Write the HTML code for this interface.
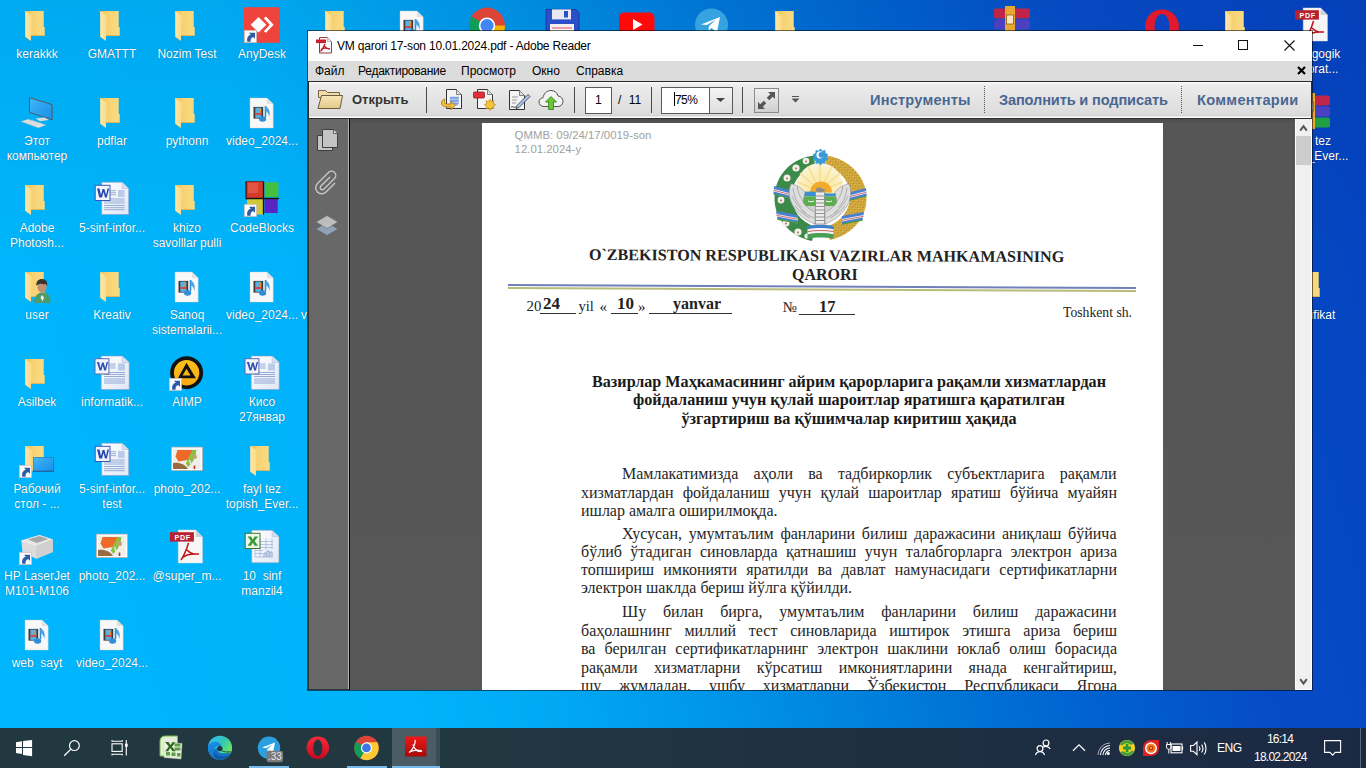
<!DOCTYPE html>
<html><head><meta charset="utf-8">
<style>
*{margin:0;padding:0;box-sizing:border-box}
html,body{width:1366px;height:768px;overflow:hidden}
body{position:relative;font-family:"Liberation Sans",sans-serif;background:linear-gradient(180deg,rgba(0,30,110,.07) 0px,rgba(0,30,110,0) 260px),linear-gradient(74deg,#00b6fc 0%,#00b3fa 27%,#01aaf4 35%,#0098ea 45%,#0080dc 56%,#0064d0 69%,#064cc6 81%,#0442be 100%)}
.a{position:absolute}
.ic{position:absolute;overflow:visible}
.lbl{position:absolute;width:76px;text-align:center;color:#fff;font-size:12px;line-height:15px;text-shadow:0 0 1px rgba(0,0,0,.45);white-space:nowrap}
.t{position:absolute;white-space:nowrap;line-height:1}
/* window */
#win{left:307px;top:30px;width:1006px;height:661px;background:#fff;background-clip:padding-box;border:1px solid rgba(0,0,0,.55)}
.menu span{position:absolute;top:64px;font-size:12px;color:#000;line-height:14px}
.tbsep{position:absolute;top:87px;width:1px;height:26px;background:#4a4a4a}
.tbl{position:absolute;top:92px;font-size:14.6px;font-weight:bold;color:#4a6792;line-height:16px;white-space:nowrap}
.dsep{position:absolute;top:86px;width:1px;height:28px;background-image:linear-gradient(#555 50%,transparent 50%);background-size:1px 2px}
.body{font-family:"Liberation Serif",serif;font-size:16px;color:#262626;line-height:18px}
.jl{position:absolute;left:581px;width:536px;text-align:justify;text-align-last:justify;white-space:nowrap}
.jl{white-space:normal}
/* taskbar */
#task{left:0;top:728px;width:1366px;height:40px;background:linear-gradient(90deg,#213841 0%,#223841 35%,#1f2f41 65%,#1b2a43 100%)}
</style></head><body>

<!-- DESKTOP ICONS -->
<div id="desk">
<svg width="0" height="0" style="position:absolute">
<defs>
 <linearGradient id="gBack" x1="0" y1="0" x2="1" y2="0"><stop offset="0" stop-color="#eebf4f"/><stop offset="0.35" stop-color="#f6d173"/><stop offset="1" stop-color="#fbdc82"/></linearGradient>
 <linearGradient id="gFlap" x1="0" y1="0" x2="1" y2="0"><stop offset="0" stop-color="#fde7a6"/><stop offset="1" stop-color="#f9da88"/></linearGradient>
 <linearGradient id="gPage" x1="0" y1="0" x2="1" y2="1"><stop offset="0" stop-color="#ffffff"/><stop offset="1" stop-color="#dfe6f4"/></linearGradient>
 <linearGradient id="gScreen" x1="0" y1="0" x2="1" y2="1"><stop offset="0" stop-color="#49b6f8"/><stop offset="0.5" stop-color="#2aa2f0"/><stop offset="1" stop-color="#1c8ee6"/></linearGradient>
 <linearGradient id="gAimp" x1="0" y1="0" x2="0" y2="1"><stop offset="0" stop-color="#fcc21c"/><stop offset="1" stop-color="#f6a910"/></linearGradient>
 <symbol id="folder" viewBox="0 0 48 48">
  <path d="M12.2 10H30.7V25.9H31.7V34.7H17.5Z" fill="url(#gBack)"/>
  <path d="M17.5 34H31.7V34.8H17.5z" fill="#eab04a"/>
  <path d="M12.2 10L18.7 14.7L17.9 39.9L12.2 35.8Z" fill="url(#gFlap)"/>
 </symbol>
 <symbol id="sc" viewBox="0 0 48 48">
  <rect x="6.3" y="29.3" width="12.3" height="12.3" fill="#fbfbfb" stroke="#c8b8b0" stroke-width="0.7"/>
  <path d="M9.3 40.8C8.6 36.8 10.2 34.6 12.8 33.8L11 31.8H17V37.8L15.1 35.9C13.2 36.6 12.2 38.2 12.6 40.8Z" fill="#2d5ba6"/>
 </symbol>
 <symbol id="video" viewBox="0 0 48 48">
  <path d="M12 10h16.9l6.3 6v24.1H12z" fill="#f8f8f8" stroke="#c8c8c8" stroke-width="0.4"/>
  <path d="M28.9 10v6h6.3z" fill="#e0e0e0"/>
  <rect x="15.5" y="18.9" width="9.7" height="11.7" fill="#3a3a3a"/>
  <rect x="17.3" y="19.6" width="6.1" height="10.3" fill="#5ab0e0"/>
  <path d="M17.3 25h6.1v2h-6.1z" fill="#d04848"/><path d="M21.5 21h1.6v4h-1.6z" fill="#f08a20"/>
  <path d="M27.5 18v11" stroke="#2e8fd8" stroke-width="1.6"/>
  <ellipse cx="24.6" cy="31" rx="3.6" ry="2.8" fill="#2e8fd8"/>
  <path d="M27.5 18c3 2 5 4.5 4 11-0.5-3-2-5-4-6" fill="#4aa4e4"/>
 </symbol>
 <symbol id="word" viewBox="0 0 48 48">
  <path d="M13.7 7.2h20.5l6.5 6.2v26.1h-27z" fill="url(#gPage)" stroke="#8a9cc4" stroke-width="0.6"/>
  <path d="M34.2 7.2v6.2h6.5" fill="#d6dff0" stroke="#a8b4d0" stroke-width="0.5"/>
  <path d="M22.5 15.7h5.5M22.5 17.7h5.5M22.5 19.7h5.5M16 24h20.5M16 26h20.5M16 28h20.5M16 30.5h20.5M16 32.7h20.5M16 34.7h20.5" stroke="#7f9ad0" stroke-width="0.8"/>
  <rect x="30" y="15" width="6.5" height="7" fill="#b8cbe8"/>
  <rect x="7.2" y="10.3" width="14.8" height="15.2" fill="#f2f4fb" stroke="#3a58b8" stroke-width="1"/>
  <path d="M9 13.5h2.5l1.5 6.5 1.6-6h1.8l1.6 6 1.5-6.5h1.6l-2.3 9h-1.8l-1.5-5.5-1.5 5.5H11.3z" fill="#2848b0"/>
 </symbol>
 <symbol id="word2" viewBox="0 0 48 48">
  <path d="M13.2 7h21l7 6.5v27.1h-28z" fill="url(#gPage)" stroke="#8a9cc4" stroke-width="0.6"/>
  <path d="M34.2 7v6.5h7" fill="#d6dff0" stroke="#a8b4d0" stroke-width="0.5"/>
  <path d="M21.5 15h6M21.5 17h6M21.5 19h6M16 23.5h21M16 25.5h21M16 27.5h21M16 30h21M16 32h21M16 34h21" stroke="#7f9ad0" stroke-width="0.8"/>
  <rect x="30" y="14.5" width="7" height="7" fill="#b8cbe8"/>
  <rect x="7" y="9.7" width="13.9" height="15.3" fill="#f2f4fb" stroke="#5a6aa8" stroke-width="1"/>
  <path d="M8.8 13h2.3l1.4 6 1.5-5.5h1.7l1.5 5.5 1.4-6h1.5l-2.2 8.4h-1.7l-1.4-5-1.4 5h-1.7z" fill="#3050b0"/>
 </symbol>
 <symbol id="anydesk" viewBox="0 0 48 48">
  <rect x="6" y="6.2" width="35.7" height="35.6" fill="#ef443b"/>
  <path d="M20.5 15.9l7.8 7.8-7.8 7.8-7.8-7.8z" fill="#fff"/>
  <path d="M25.8 17.2l2.2-1.6 7.6 8.1-7.6 8.1-2.2-1.6 6-6.5z" fill="#fff"/>
 </symbol>
 <symbol id="thispc" viewBox="0 0 48 48">
  <path d="M16.5 9.7L39.1 16.6V31.8L16.5 24.3z" fill="url(#gScreen)" stroke="#555" stroke-width="0.9"/>
  <path d="M22.5 30.6l9-1 4.5 2.5-9 1.2z" fill="#dcdcdc"/>
  <path d="M8.2 33.5L15 31.2 32.8 37 25.4 39.8z" fill="#e4e4e4" stroke="#bbb" stroke-width="0.4"/>
  <path d="M12 33.5l12 4M15 32.5l12 4M18 31.8l11 4" stroke="#c4c4c4" stroke-width="0.5"/>
 </symbol>
 <symbol id="codeblocks" viewBox="0 0 48 48">
  <rect x="7.5" y="6.3" width="18" height="18" fill="#111"/>
  <rect x="8.6" y="6.6" width="16.9" height="16.9" fill="#d83a2a"/>
  <rect x="10" y="8" width="10" height="10" fill="#e8685a" opacity="0.6"/>
  <rect x="26.6" y="7.2" width="13.8" height="15" fill="#44c040"/>
  <rect x="9" y="24" width="16.5" height="15.5" fill="#d0c838"/>
  <rect x="26.5" y="23" width="13.2" height="15" fill="#5a24c4"/>
  <path d="M25.5 6.5v33M8 23.5h33" stroke="#151515" stroke-width="1.3"/>
 </symbol>
 <symbol id="user" viewBox="0 0 48 48">
  <use href="#folder"/>
  <path d="M21 41c0-6 2.5-10 8.5-10.5s8 3.5 8 10.5z" fill="#4f9a6a"/>
  <path d="M27.5 35.5l1.5-2.5 2 2.5-1.5 4z" fill="#e8f0f0"/>
  <ellipse cx="29" cy="25" rx="4.6" ry="5.8" fill="#c09070"/>
  <path d="M23.2 23.5c0-4.5 2.5-6.5 6-6.5 4 0 5.5 3 5 7-1-2-2-2.5-3-1.5-2-1.5-5-1-8 1z" fill="#3a3530"/>
 </symbol>
 <symbol id="aimp" viewBox="0 0 48 48">
  <circle cx="23.6" cy="23.7" r="14.6" fill="url(#gAimp)" stroke="#111" stroke-width="3.8"/>
  <path d="M14.9 29.2L23.5 13.7L32.9 29.2ZM19.5 26.6L27.5 26.6L23.5 19.8Z" fill="#111" fill-rule="evenodd"/>
 </symbol>
 <symbol id="deskfolder" viewBox="0 0 48 48">
  <use href="#folder"/>
  <rect x="20.3" y="21.3" width="20.4" height="14.4" fill="url(#gScreen)" stroke="#1a70b8" stroke-width="0.6"/>
  <path d="M20.3 35.2h20.4" stroke="#1c5c98" stroke-width="1"/>
 </symbol>
 <symbol id="photo" viewBox="0 0 48 48">
  <rect x="8.3" y="11.1" width="31.2" height="23.4" fill="#fff" stroke="#b8a8a0" stroke-width="0.7"/>
  <rect x="10" y="12.7" width="27.8" height="20.2" fill="#eeeeea"/>
  <path d="M14.5 14h16l-6 10-9 1.5-3-5z" fill="#ee6a28"/>
  <path d="M29.5 14h3.8l-1 8.5-7 8.5-2.5-3.5z" fill="#8ac040"/>
  <path d="M10 27c6-1 12 1 15 6h-15z" fill="#9a6a40"/>
  <path d="M26.5 24l3 9" stroke="#e8e8e8" stroke-width="1.4"/><path d="M31.5 21.5v11.5" stroke="#f0f0f0" stroke-width="1.6"/>
  <path d="M31.5 29.5v3.5" stroke="#c02a2a" stroke-width="1.6"/><circle cx="31.8" cy="20.8" r="2.2" fill="#c8a070"/>
 </symbol>
 <symbol id="printer" viewBox="0 0 48 48">
  <path d="M8.3 17.6L26.5 12l13.3 4.6v12.3L23.2 35.8 9.5 29.3z" fill="#dcdcdc"/>
  <path d="M8.3 17.6L26.5 12l13.3 4.6-16.6 6.2z" fill="#e6e6e6"/>
  <path d="M15 16.5l11.5-3.5 8.5 3-11 4z" fill="#a8a8a8"/>
  <path d="M23.2 22.8v13l16.6-6.9V16.6z" fill="#d0d0d0"/>
  <path d="M23.2 22.8L8.3 17.6" stroke="#f4f4f4" stroke-width="0.6"/>
 </symbol>
 <symbol id="pdf" viewBox="0 0 48 48">
  <path d="M15.2 6.9h17.5l6.8 7v26.2H15.2z" fill="#f6f6f6" stroke="#d8d8d8" stroke-width="0.4"/>
  <path d="M32.7 6.9v7h6.8z" fill="#d0d0d0"/>
  <rect x="6.9" y="9.2" width="24" height="9.4" fill="#b82230"/>
  <text x="11.5" y="16.8" font-family="Liberation Sans" font-size="7.2" font-weight="bold" fill="#fff" letter-spacing="0.6">PDF</text>
  <path d="M25.5 20c-1.5 5-4 12-7.5 17M24 27c3 3 7.5 4.5 12 4M19 35c3-3 9-4.5 16-4" stroke="#c01018" stroke-width="1.5" fill="none"/>
 </symbol>
 <symbol id="excel" viewBox="0 0 48 48">
  <path d="M13.7 7.2h20.5l6.8 6.5v26.1H13.7z" fill="url(#gPage)" stroke="#8a9cc4" stroke-width="0.6"/>
  <path d="M34.2 7.2v6.5h6.8" fill="#d6dff0" stroke="#a8b4d0" stroke-width="0.5"/>
  <path d="M17 15.5v18.5h18M22 15.5v18M28 15.5v11M34 15.5v11M17 18.5h18M17 21.5h18M17 24.5h18M17 27.5h8M17 30.5h8" fill="none" stroke="#a8b8dc" stroke-width="0.8"/>
  <path d="M26 34v-4h2v4M29 34v-6h2v6M32 34v-5h2v5" fill="none" stroke="#8aa0cc" stroke-width="0.9"/>
  <rect x="7.2" y="10.3" width="14.8" height="15.2" fill="#eef6ea" stroke="#3c7a2a" stroke-width="1"/>
  <path d="M9.5 13.5h3.5l1.8 3 1.8-3h3.5l-3.5 4.5 3.5 4.8h-3.5l-1.8-3-1.8 3H9.5l3.5-4.8z" fill="#3a9a3a"/>
 </symbol>
 <symbol id="chrome" viewBox="0 0 48 48">
  <circle cx="24" cy="24.6" r="18" fill="#db4437"/>
  <path d="M24 24.6L8.4 15.6A18 18 0 0 0 15 40.2z" fill="#0f9d58"/>
  <path d="M24 24.6L15 40.2A18 18 0 0 0 42 24.6z" fill="#f4b400"/>
  <circle cx="24" cy="24.6" r="8.2" fill="#fff"/><circle cx="24" cy="24.6" r="6.6" fill="#4285f4"/>
 </symbol>
 <symbol id="floppy" viewBox="0 0 48 48">
  <path d="M8 8.4h30l3 3V40H8z" fill="#2a4fc8" stroke="#18309a" stroke-width="0.8"/>
  <rect x="14" y="8.4" width="19" height="10" fill="#e8e8f0"/>
  <rect x="26" y="10" width="4" height="6.5" fill="#2a4fc8"/>
  <rect x="12" y="23" width="24" height="15" fill="#f4f0f0"/>
  <path d="M14 27h20M14 31h20M14 35h20" stroke="#e05060" stroke-width="1"/>
 </symbol>
 <symbol id="youtube" viewBox="0 0 48 48">
  <rect x="6" y="11.6" width="35.5" height="25" rx="5" fill="#ff0a0a"/>
  <path d="M20 18v11l9.5-5.5z" fill="#fff"/>
 </symbol>
 <symbol id="telegram" viewBox="0 0 48 48">
  <circle cx="23.5" cy="23.9" r="16.5" fill="#36a3e0"/>
  <path d="M13 23.5l19-7.5-3 15-5.5-4-3 2.5.5-4.5 7-6.5-9 5.5z" fill="#fff"/>
 </symbol>
 <symbol id="winrar" viewBox="0 0 48 48">
  <rect x="6" y="7.6" width="36" height="10" rx="2" fill="#c02448"/>
  <rect x="6" y="18.5" width="36" height="10" rx="2" fill="#4a40c0"/>
  <rect x="6" y="29.5" width="36" height="10" rx="2" fill="#20a040"/>
  <rect x="17" y="5" width="10" height="36" fill="#e8a830"/>
  <rect x="18.5" y="14" width="7" height="9" fill="#f8e8c0" stroke="#8a5a10" stroke-width="0.8"/>
 </symbol>
 <symbol id="opera" viewBox="0 0 48 48">
  <ellipse cx="24" cy="25.5" rx="17" ry="17" fill="#e0192c"/>
  <ellipse cx="24" cy="25.5" rx="7.5" ry="12.5" fill="#0a44c0"/>
 </symbol>
</defs>
</svg>

<svg class="ic" style="left:13px;top:1px" width="48" height="48"><use href="#folder"/></svg>
<div class="lbl" style="left:-1px;top:46.7px">kerakkk</div>
<svg class="ic" style="left:88px;top:1px" width="48" height="48"><use href="#folder"/></svg>
<div class="lbl" style="left:74px;top:46.7px">GMATTT</div>
<svg class="ic" style="left:163px;top:1px" width="48" height="48"><use href="#folder"/></svg>
<div class="lbl" style="left:149px;top:46.7px">Nozim Test</div>
<svg class="ic" style="left:238px;top:1px" width="48" height="48"><use href="#anydesk"/><use href="#sc"/></svg>
<div class="lbl" style="left:224px;top:46.7px">AnyDesk</div>
<svg class="ic" style="left:313px;top:1px" width="48" height="48"><use href="#folder"/></svg>
<svg class="ic" style="left:388px;top:1px" width="48" height="48"><use href="#video"/></svg>
<svg class="ic" style="left:463px;top:1px" width="48" height="48"><use href="#chrome"/></svg>
<svg class="ic" style="left:538px;top:1px" width="48" height="48"><use href="#floppy"/></svg>
<svg class="ic" style="left:613px;top:1px" width="48" height="48"><use href="#youtube"/></svg>
<svg class="ic" style="left:688px;top:1px" width="48" height="48"><use href="#telegram"/></svg>
<svg class="ic" style="left:763px;top:1px" width="48" height="48"><use href="#folder"/></svg>
<svg class="ic" style="left:988px;top:1px" width="48" height="48"><use href="#winrar"/></svg>
<svg class="ic" style="left:1138px;top:1px" width="48" height="48"><use href="#opera"/></svg>
<svg class="ic" style="left:1213px;top:1px" width="48" height="48"><use href="#folder"/></svg>
<svg class="ic" style="left:1288px;top:1px" width="48" height="48"><use href="#pdf"/></svg>
<div class="lbl" style="left:1274px;top:46.7px">Pedagogik<br><span style="padding-left:6px">laborat...</span></div>
<svg class="ic" style="left:13px;top:88px" width="48" height="48"><use href="#thispc"/></svg>
<div class="lbl" style="left:-1px;top:133.7px">Этот<br>компьютер</div>
<svg class="ic" style="left:88px;top:88px" width="48" height="48"><use href="#folder"/></svg>
<div class="lbl" style="left:74px;top:133.7px">pdflar</div>
<svg class="ic" style="left:163px;top:88px" width="48" height="48"><use href="#folder"/></svg>
<div class="lbl" style="left:149px;top:133.7px">pythonn</div>
<svg class="ic" style="left:238px;top:88px" width="48" height="48"><use href="#video"/></svg>
<div class="lbl" style="left:224px;top:133.7px">video_2024...</div>
<svg class="ic" style="left:1288px;top:88px" width="48" height="48"><use href="#winrar"/></svg>
<div class="lbl" style="left:1274px;top:133.7px">fayl tez<br>topish_Ever...</div>
<svg class="ic" style="left:13px;top:175px" width="48" height="48"><use href="#folder"/></svg>
<div class="lbl" style="left:-1px;top:220.7px">Adobe<br>Photosh...</div>
<svg class="ic" style="left:88px;top:175px" width="48" height="48"><use href="#word"/></svg>
<div class="lbl" style="left:74px;top:220.7px">5-sinf-infor...</div>
<svg class="ic" style="left:163px;top:175px" width="48" height="48"><use href="#folder"/></svg>
<div class="lbl" style="left:149px;top:220.7px">khizo<br>savolllar pulli</div>
<svg class="ic" style="left:238px;top:175px" width="48" height="48"><use href="#codeblocks"/><use href="#sc"/></svg>
<div class="lbl" style="left:224px;top:220.7px">CodeBlocks</div>
<svg class="ic" style="left:13px;top:262px" width="48" height="48"><use href="#user"/></svg>
<div class="lbl" style="left:-1px;top:307.7px">user</div>
<svg class="ic" style="left:88px;top:262px" width="48" height="48"><use href="#folder"/></svg>
<div class="lbl" style="left:74px;top:307.7px">Kreativ</div>
<svg class="ic" style="left:163px;top:262px" width="48" height="48"><use href="#video"/></svg>
<div class="lbl" style="left:149px;top:307.7px">Sanoq<br>sistemalarii...</div>
<svg class="ic" style="left:238px;top:262px" width="48" height="48"><use href="#video"/></svg>
<div class="lbl" style="left:224px;top:307.7px">video_2024...</div>
<div class="lbl" style="left:299px;top:307.7px">video_2024...</div>
<svg class="ic" style="left:1288px;top:262px" width="48" height="48"><use href="#folder"/></svg>
<div class="lbl" style="left:1274px;top:307.7px">Sertifikat</div>
<svg class="ic" style="left:13px;top:349px" width="48" height="48"><use href="#folder"/></svg>
<div class="lbl" style="left:-1px;top:394.7px">Asilbek</div>
<svg class="ic" style="left:88px;top:349px" width="48" height="48"><use href="#word2"/></svg>
<div class="lbl" style="left:74px;top:394.7px">informatik...</div>
<svg class="ic" style="left:163px;top:349px" width="48" height="48"><use href="#aimp"/><use href="#sc"/></svg>
<div class="lbl" style="left:149px;top:394.7px">AIMP</div>
<svg class="ic" style="left:238px;top:349px" width="48" height="48"><use href="#word2"/></svg>
<div class="lbl" style="left:224px;top:394.7px">Кисо<br>27январ</div>
<svg class="ic" style="left:13px;top:436px" width="48" height="48"><use href="#deskfolder"/><use href="#sc"/></svg>
<div class="lbl" style="left:-1px;top:481.7px">Рабочий<br>стол - ...</div>
<svg class="ic" style="left:88px;top:436px" width="48" height="48"><use href="#word"/></svg>
<div class="lbl" style="left:74px;top:481.7px">5-sinf-infor...<br>test</div>
<svg class="ic" style="left:163px;top:436px" width="48" height="48"><use href="#photo"/></svg>
<div class="lbl" style="left:149px;top:481.7px">photo_202...</div>
<svg class="ic" style="left:238px;top:436px" width="48" height="48"><use href="#folder"/></svg>
<div class="lbl" style="left:224px;top:481.7px">fayl tez<br>topish_Ever...</div>
<svg class="ic" style="left:13px;top:523px" width="48" height="48"><use href="#printer"/><use href="#sc"/></svg>
<div class="lbl" style="left:-1px;top:568.7px">HP LaserJet<br>M101-M106</div>
<svg class="ic" style="left:88px;top:523px" width="48" height="48"><use href="#photo"/></svg>
<div class="lbl" style="left:74px;top:568.7px">photo_202...</div>
<svg class="ic" style="left:163px;top:523px" width="48" height="48"><use href="#pdf"/></svg>
<div class="lbl" style="left:149px;top:568.7px">@super_m...</div>
<svg class="ic" style="left:238px;top:523px" width="48" height="48"><use href="#excel"/></svg>
<div class="lbl" style="left:224px;top:568.7px">10&nbsp; sinf<br>manzil4</div>
<svg class="ic" style="left:13px;top:610px" width="48" height="48"><use href="#video"/></svg>
<div class="lbl" style="left:-1px;top:655.7px">web&nbsp; sayt</div>
<svg class="ic" style="left:88px;top:610px" width="48" height="48"><use href="#video"/></svg>
<div class="lbl" style="left:74px;top:655.7px">video_2024...</div></div><!--/desk-->

<!-- WINDOW -->
<div class="a" id="win"></div>
<!-- title -->
<svg class="ic" style="left:316px;top:37px" width="17" height="17" viewBox="0 0 17 17">
  <path d="M3.5 0.5h8l4 4v11.5h-12z" fill="#fafafa" stroke="#9a3b44" stroke-width="1"/>
  <path d="M11.5 0.5v4h4" fill="#e8e8e8" stroke="#b0b0b0" stroke-width="0.8"/>
  <rect x="0" y="2.5" width="10" height="3.6" fill="#c8202c"/>
  <path d="M9 7c-1 2-2 5-4.5 7.5M8.5 9.5c1.5 1.5 3.5 2.5 5.5 2.5M5 12.5c1.5-1 4-1.5 6-1.2" stroke="#c01820" stroke-width="1.3" fill="none"/>
</svg>
<div class="t" style="left:337px;top:40px;font-size:12px;letter-spacing:-0.2px;color:#000">VM qarori 17-son 10.01.2024.pdf - Adobe Reader</div>
<div class="a" style="left:1193px;top:45px;width:10px;height:1px;background:#111"></div>
<div class="a" style="left:1238px;top:40px;width:10px;height:10px;border:1px solid #111"></div>
<svg class="ic" style="left:1284px;top:40px" width="11" height="11" viewBox="0 0 11 11"><path d="M0.5 0.5L10.5 10.5M10.5 0.5L0.5 10.5" stroke="#111" stroke-width="1.1"/></svg>
<!-- menu -->
<div class="a" style="left:308px;top:61px;width:1004px;height:20px;background:#dcdcdc"></div>
<div class="menu">
  <span style="left:315px">Файл</span>
  <span style="left:358px;letter-spacing:-0.25px">Редактирование</span>
  <span style="left:461px">Просмотр</span>
  <span style="left:532px">Окно</span>
  <span style="left:576px">Справка</span>
</div>
<svg class="ic" style="left:1297px;top:66px" width="9" height="9" viewBox="0 0 9 9"><path d="M1 1L8 8M8 1L1 8" stroke="#000" stroke-width="2.2"/></svg>
<!-- toolbar -->
<div class="a" style="left:308px;top:81px;width:1004px;height:38px;background:#2c2c2c"></div>
<div class="a" style="left:309px;top:82px;width:1002px;height:36px;background:linear-gradient(#fbfbfb 0px,#ececec 3px,#dcdcdc 32px,#d2d2d2 34px,#fdfdfd 35px)"></div>
<!-- open folder icon -->
<svg class="ic" style="left:317px;top:89px" width="27" height="21" viewBox="0 0 27 21">
  <defs><linearGradient id="fo" x1="0" y1="0" x2="0" y2="1"><stop offset="0" stop-color="#f7e6b6"/><stop offset="1" stop-color="#e2c98c"/></linearGradient></defs>
  <path d="M1.5 1.5h7l2 2h12v5h-21z" fill="#efdcaa" stroke="#7a6440" stroke-width="1"/>
  <path d="M4.5 6.5h21l-2.5 13h-22z" fill="url(#fo)" stroke="#6e5a3a" stroke-width="1"/>
</svg>
<div class="t" style="left:352px;top:93px;font-size:13px;font-weight:bold;color:#333">Открыть</div>
<div class="tbsep" style="left:426px"></div>
<!-- tool icons -->
<svg class="ic" style="left:440px;top:88px" width="25" height="24" viewBox="0 0 25 24">
  <path d="M6.5 1.5h10l5 5v14h-15z" fill="#f4f4f4" stroke="#333" stroke-width="1"/>
  <path d="M16.5 1.5v5h5" fill="#ddd" stroke="#666" stroke-width="0.8"/>
  <path d="M9.8 9.3h9M9.8 10.8h9M9.8 12.3h9M9.8 13.8h9M9.8 15.3h9M9.8 16.8h8" stroke="#2a6ad8" stroke-width="0.75"/>
  <path d="M5 11c-5 1-5 8 2 8h4v3l4-4.5-4-4.5v3h-4c-3 0-3-3-2-5z" fill="#f2c040" stroke="#b07a10" stroke-width="0.9"/>
</svg>
<svg class="ic" style="left:473px;top:88px" width="25" height="24" viewBox="0 0 25 24">
  <path d="M4.5 1.5h10l5 5v14h-15z" fill="#f4f4f4" stroke="#333" stroke-width="1"/>
  <path d="M14.5 1.5v5h5" fill="#ddd" stroke="#666" stroke-width="0.8"/>
  <rect x="0.5" y="4" width="11" height="6" rx="1" fill="#e0303c" stroke="#9a1820" stroke-width="0.8"/>
  <path d="M17 11l1.3 2.4 2.6-.6-.6 2.6 2.4 1.3-2.4 1.3.6 2.6-2.6-.6L17 22.5l-1.3-2.4-2.6.6.6-2.6-2.4-1.3 2.4-1.3-.6-2.6 2.6.6z" fill="#f3c43a" stroke="#c08a10" stroke-width="0.7"/>
</svg>
<svg class="ic" style="left:507px;top:89px" width="24" height="23" viewBox="0 0 24 23">
  <path d="M2.5 1.5h10l5 5v14h-15z" fill="#f4f4f4" stroke="#333" stroke-width="1"/>
  <path d="M12.5 1.5v5h5" fill="#ddd" stroke="#666" stroke-width="0.8"/>
  <path d="M5 8h6M5 11h5M5 14h4" stroke="#999" stroke-width="1"/>
  <path d="M21 5.5l2 2-11 11-3 1 1-3z" fill="#a8c8e8" stroke="#445" stroke-width="0.9"/>
  <path d="M4 18c2-1 3 1 5 0" stroke="#333" stroke-width="0.9" fill="none"/>
</svg>
<svg class="ic" style="left:538px;top:89px" width="26" height="22" viewBox="0 0 26 22">
  <path d="M6 17.5c-3 0-5-2-5-4.5 0-2.4 1.8-4 4-4.2C5.5 5 8.5 1.5 13 1.5c3.8 0 6.5 2.5 7.2 5.6 2.7.2 4.8 2.4 4.8 5.2 0 2.9-2.2 5.2-5 5.2z" fill="#f2f2f2" stroke="#555" stroke-width="1"/>
  <path d="M13 7.5l5.5 5.5h-3v7.5h-5V13h-3z" fill="#6cc43c" stroke="#3a8a1a" stroke-width="0.9"/>
</svg>
<div class="tbsep" style="left:574px"></div>
<!-- page box -->
<div class="a" style="left:585px;top:87px;width:27px;height:27px;background:#fff;border:1px solid #5a5a5a"></div>
<div class="t" style="left:595px;top:94px;font-size:12px;color:#000">1</div>
<div class="t" style="left:618px;top:94px;font-size:12px;color:#000;word-spacing:4px">/ 11</div>
<div class="tbsep" style="left:651px"></div>
<!-- zoom box -->
<div class="a" style="left:661px;top:87px;width:72px;height:27px;background:#fff;border:1px solid #5a5a5a"></div>
<div class="a" style="left:709px;top:88px;width:23px;height:25px;background:linear-gradient(#f4f4f4,#dedede);border-left:1px solid #5a5a5a"></div>
<svg class="ic" style="left:716px;top:98px" width="9" height="4" viewBox="0 0 9 4"><path d="M0 0h9l-4.5 4z" fill="#444"/></svg>
<div class="a" style="left:674px;top:92px;width:1px;height:14px;background:#000"></div>
<div class="t" style="left:675px;top:94px;font-size:12px;color:#000;letter-spacing:-0.6px">75%</div>
<div class="tbsep" style="left:742px"></div>
<!-- fullscreen button -->
<div class="a" style="left:754px;top:88px;width:25px;height:25px;background:linear-gradient(#f0f0f0,#cfcfcf);border:1px solid #8a8a8a"></div>
<svg class="ic" style="left:757px;top:91px" width="19" height="19" viewBox="0 0 19 19">
  <path d="M18 1l-7 0 2.3 2.3-3.5 3.5 2.4 2.4 3.5-3.5L18 8z" fill="#555"/>
  <path d="M1 18l7 0-2.3-2.3 3.5-3.5-2.4-2.4-3.5 3.5L1 11z" fill="#555"/>
</svg>
<svg class="ic" style="left:791px;top:96px" width="9" height="7" viewBox="0 0 9 7"><path d="M1 0.5h7" stroke="#555" stroke-width="1"/><path d="M0.5 2.5h8l-4 4z" fill="#555"/></svg>
<!-- right labels -->
<div class="tbl" style="left:870px;letter-spacing:0.2px">Инструменты</div>
<div class="dsep" style="left:984px"></div>
<div class="tbl" style="left:999px;letter-spacing:-0.15px">Заполнить и подписать</div>
<div class="dsep" style="left:1181px"></div>
<div class="tbl" style="left:1197px;letter-spacing:0.3px">Комментарии</div>

<!-- left nav panel -->
<div class="a" style="left:308px;top:119px;width:40px;height:571px;background:#686868"></div>
<div class="a" style="left:348px;top:119px;width:1px;height:571px;background:#b4b4b4"></div>
<div class="a" style="left:308px;top:119px;width:1px;height:571px;background:#353535"></div>
<div class="a" style="left:308px;top:689px;width:41px;height:1px;background:#353535"></div>
<div class="a" style="left:349px;top:119px;width:1px;height:571px;background:#000"></div>
<!-- nav icons -->
<svg class="ic" style="left:316px;top:128px" width="23" height="24" viewBox="0 0 23 24">
  <path d="M1.5 7.5h15v15h-15z" fill="#c4c4c4" stroke="#3e3e3e" stroke-width="1"/>
  <path d="M6.5 1.5h11l4 4v14h-15z" fill="#c4c4c4" stroke="#3e3e3e" stroke-width="1"/>
  <path d="M17.5 1.5v4h4" fill="#e6e6e6" stroke="#3e3e3e" stroke-width="0.8"/>
</svg>
<svg class="ic" style="left:315px;top:170px" width="24" height="25" viewBox="0 0 24 25">
  <path d="M15 7L5.5 16.5a2.2 2.2 0 0 0 3 3l11-11a4.2 4.2 0 0 0-6-6L2.5 13.5a6 6 0 0 0 8.5 8.5L20 13" fill="none" stroke="#c8c8c8" stroke-width="1.4"/>
</svg>
<svg class="ic" style="left:315px;top:214px" width="24" height="24" viewBox="0 0 24 24">
  <path d="M12 8.5l11 6.5-11 6.5L1 15z" fill="#8fa2b6" stroke="#5a6670" stroke-width="0.6"/>
  <path d="M12 1.5l11 6.5-11 6.5L1 8z" fill="#c4c4c4" stroke="#666" stroke-width="0.6" opacity="0.92"/>
</svg>

<!-- document area -->
<div class="a" style="left:350px;top:119px;width:945px;height:571px;background:linear-gradient(#4c4c4c 0px,#565656 4px,#575757 100%)"></div>
<div class="a" id="page" style="left:482px;top:123px;width:681px;height:567px;background:#fff;overflow:hidden"></div>

<div class="a" style="left:0;top:0;width:1366px;height:690px;overflow:hidden">
<div class="t" style="left:514.6px;top:130px;font-size:11.4px;color:#a0a0a0">QMMB: 09/24/17/0019-son</div>
<div class="t" style="left:514.6px;top:144px;font-size:11.4px;color:#a0a0a0">12.01.2024-y</div>
<!-- emblem -->
<svg class="ic" style="left:770px;top:146px" width="100" height="98" viewBox="0 0 100 98">
  <defs>
    <radialGradient id="sun" cx="0.5" cy="0.62" r="0.6"><stop offset="0" stop-color="#fde8a0"/><stop offset="0.7" stop-color="#fbeebb"/><stop offset="1" stop-color="#f8f3dc"/></radialGradient>
    <pattern id="wheat" width="4" height="3.5" patternUnits="userSpaceOnUse" patternTransform="rotate(-40)"><rect width="4" height="3.5" fill="#e8bc44"/><ellipse cx="2" cy="1.75" rx="1.9" ry="1.1" fill="none" stroke="#8a6a28" stroke-width="0.5"/></pattern>
  </defs>
  <path d="M44 9.5C22 12 5 29 4.5 51.5 4 72 19 90 42 95l4-14C30 76 22 64 22 50c0-15 10-26 23-30z" fill="#3c8a4a"/>
  <path d="M56 9.5c22 3 40 20 40.5 42C97 72 82 89 60 94l-4-13c15-5 24-17 24-31 0-15-10-26-24-30z" fill="url(#wheat)"/>
  <g fill="#f2eee8"><circle cx="36" cy="15" r="3.3"/><circle cx="26" cy="22" r="3.6"/><circle cx="17" cy="32" r="3.5"/><circle cx="11" cy="54" r="3.4"/><circle cx="16" cy="77" r="3.6"/><circle cx="28" cy="86" r="3.6"/><circle cx="37" cy="90" r="2.6"/></g>
  <g fill="#b07850"><circle cx="36" cy="15.5" r="1"/><circle cx="26" cy="22.5" r="1"/><circle cx="17" cy="32.5" r="1"/><circle cx="11" cy="54.5" r="1"/><circle cx="16" cy="77.5" r="1"/><circle cx="28" cy="86.5" r="1"/></g>
  <!-- ribbons -->
  <g>
   <path d="M4 40l19 5v8L3.5 48z" fill="#4a80d0"/><path d="M4 43l19 5v2.5L3.8 45.5z" fill="#f4f0f0"/><path d="M4 44.3l19 5" stroke="#c04040" stroke-width="0.7"/><path d="M3.6 47.5l19.5 5v1L3.5 48.5z" fill="#4a9a50"/>
   <path d="M6 65l22 4v8L7.5 73z" fill="#4a80d0"/><path d="M6.3 68l21.7 4v2.5L7 70.5z" fill="#f4f0f0"/><path d="M6.5 69.3l21.5 4" stroke="#c04040" stroke-width="0.7"/><path d="M7.2 72.3l20.8 4v1.5L7.6 74z" fill="#4a9a50"/>
   <path d="M96 42l-19 5v8l19.5-5z" fill="#4a80d0"/><path d="M96 45l-19 5v2.5l19.2-5z" fill="#f4f0f0"/><path d="M96 46.3l-19 5" stroke="#c04040" stroke-width="0.7"/><path d="M96.4 49.5l-19.5 5v1l19.6-5z" fill="#4a9a50"/>
   <path d="M94 66l-22 4v8l20.5-4z" fill="#4a80d0"/><path d="M93.7 69l-21.7 4v2.5L93 71.5z" fill="#f4f0f0"/><path d="M93.5 70.3L72 74.3" stroke="#c04040" stroke-width="0.7"/><path d="M92.8 73.3L72 77.3v1.5l20.4-4z" fill="#4a9a50"/>
  </g>
  <!-- sun disc -->
  <circle cx="50" cy="40" r="23" fill="url(#sun)"/>
  <g stroke="#f6dc8a" stroke-width="1.5" opacity="0.85"><path d="M50 45V18M50 45L38 20M50 45L62 20M50 45L30 27M50 45L70 27M50 45L27 36M50 45L73 36"/></g>
  <path d="M40 46.5a11 11 0 0 1 22 0z" fill="#f3aa2c"/>
  <path d="M30 46.5c7-1.5 14-1 20 0s13 1.5 20 0v4H30z" fill="#3a8fd0"/>
  <path d="M31 50.5h38l-4 12H35z" fill="#5cae4c"/>
  <path d="M38 55c2 1 4 1 6 0M56 55c2 1 4 1 6 0" fill="none" stroke="#fff" stroke-width="1"/>
  <!-- wings -->
  <path d="M33 60h34l-11 19h-12z" fill="#d0d0d0"/>
  <path d="M35 46C31 42 26 38 21 38c-3 7-2 15 2 22 4 7 11 14 22 18V66C40 64 35 60 33 56z" fill="#dedede" stroke="#909090" stroke-width="0.6"/>
  <path d="M65 46c4-4 9-8 14-8 3 7 2 15-2 22-4 7-11 14-22 18V66c5-2 10-6 12-10z" fill="#dedede" stroke="#909090" stroke-width="0.6"/>
  <g stroke="#8e8e8e" stroke-width="0.6" fill="none">
   <path d="M23 42c1 8 4 15 9 20M27 40c1 6 3 11 6 15M22 50c3 7 8 13 14 17M25 60c4 5 9 9 15 12M31 64c3 3 8 6 13 8"/>
   <path d="M77 42c-1 8-4 15-9 20M73 40c-1 6-3 11-6 15M78 50c-3 7-8 13-14 17M75 60c-4 5-9 9-15 12M69 64c-3 3-8 6-13 8"/>
  </g>
  <path d="M45.5 46h9v32h-9z" fill="#ececec" stroke="#7a7a7a" stroke-width="0.6"/>
  <path d="M45.5 50h9M45.5 53.5h9M45.5 57h9M45.5 60.5h9M45.5 64h9M45.5 67.5h9M45.5 71h9M45.5 74.5h9" stroke="#7a7a7a" stroke-width="0.8"/>
  <path d="M46 43c1-2 5-2 7 0l3 1-3 1.5c-2 1-5 1-7-.5z" fill="#8a8a8a"/>
  <!-- bottom banner -->
  <path d="M37.5 80c8-1.5 18-1.5 26 0v12.5c-8-1.5-18-1.5-26 0z" fill="#4aa052"/>
  <path d="M37.5 80c8-1.5 18-1.5 26 0v3.2c-8-1.5-18-1.5-26 0z" fill="#3f7fd0"/>
  <path d="M37.5 83.2c8-1.5 18-1.5 26 0v5c-8-1.5-18-1.5-26 0z" fill="#f4f2f2"/>
  <path d="M37.5 85.6c8-1.5 18-1.5 26 0" stroke="#c04040" stroke-width="0.8" fill="none"/>
  <!-- star -->
  <path d="M50.5 2.4l1.9 2.3 2.9-.6.3 3 2.7 1.3-1.5 2.6 1.5 2.6-2.7 1.3-.3 3-2.9-.6-1.9 2.3-1.9-2.3-2.9.6-.3-3-2.7-1.3 1.5-2.6-1.5-2.6 2.7-1.3.3-3 2.9.6z" fill="#3a9ad8"/>
  <circle cx="50" cy="8.8" r="3.6" fill="#fff"/><circle cx="51.5" cy="8.8" r="2.9" fill="#3a9ad8"/>
</svg>
<div class="t" style="left:589px;top:247.3px;font-family:'Liberation Serif',serif;font-size:16.1px;font-weight:bold;color:#222;transform:rotate(0.25deg);transform-origin:0 0">O`ZBEKISTON RESPUBLIKASI VAZIRLAR MAHKAMASINING</div>
<div class="t" style="left:792px;top:266.5px;font-family:'Liberation Serif',serif;font-size:16px;font-weight:bold;color:#222">QARORI</div>
<div class="a" style="left:508px;top:284px;width:628px;height:2px;background:#7080b8;transform:rotate(0.27deg);transform-origin:0 0"></div>
<div class="a" style="left:508px;top:287px;width:628px;height:1.5px;background:#b8bc7a;transform:rotate(0.27deg);transform-origin:0 0"></div>
<div style="font-family:'Liberation Serif',serif;color:#222">
  <div class="t" style="left:526.5px;top:298.5px;font-size:14.8px">20</div>
  <div class="t" style="left:543px;top:294.6px;font-size:17px;font-weight:bold">24</div>
  <div class="a" style="left:540px;top:313px;width:36px;height:1px;background:#333"></div>
  <div class="t" style="left:578.5px;top:298.8px;font-size:14.6px">yil</div>
  <div class="t" style="left:599.5px;top:299.5px;font-size:15px">«</div>
  <div class="t" style="left:617px;top:295px;font-size:17px;font-weight:bold">10</div>
  <div class="a" style="left:611px;top:313px;width:27px;height:1px;background:#333"></div>
  <div class="t" style="left:638px;top:299.5px;font-size:15px">»</div>
  <div class="t" style="left:673px;top:295.9px;font-size:16px;font-weight:bold">yanvar</div>
  <div class="a" style="left:648.5px;top:313.3px;width:83px;height:1px;background:#333"></div>
  <div class="t" style="left:782.5px;top:300px;font-size:15px">№</div>
  <div class="t" style="left:819px;top:299px;font-size:16.5px;font-weight:bold">17</div>
  <div class="a" style="left:799px;top:314px;width:56px;height:1px;background:#333"></div>
  <div class="t" style="left:1063px;top:305.5px;font-size:13.7px">Toshkent sh.</div>
</div>
<div class="body">
  <div class="t" style="left:0;width:1698px;text-align:center;top:373.9px;font-weight:bold;color:#1a1a1a;font-size:16.15px">Вазирлар Маҳкамасининг айрим қарорларига рақамли хизматлардан</div>
  <div class="t" style="left:0;width:1698px;text-align:center;top:391.7px;font-weight:bold;color:#1a1a1a;font-size:16.2px">фойдаланиш учун қулай шароитлар яратишга қаратилган</div>
  <div class="t" style="left:0;width:1698px;text-align:center;top:410.6px;font-weight:bold;color:#1a1a1a;font-size:16.2px">ўзгартириш ва қўшимчалар киритиш ҳақида</div>

  <div class="jl" style="top:465.3px;left:622px;width:494.5px">Мамлакатимизда аҳоли ва тадбиркорлик субъектларига рақамли</div>
  <div class="jl" style="top:483.8px">хизматлардан фойдаланиш учун қулай шароитлар яратиш бўйича муайян</div>
  <div class="t" style="top:502.2px;left:581px;line-height:18px">ишлар амалга оширилмоқда.</div>

  <div class="jl" style="top:525.3px;left:622px;width:494.5px">Хусусан, умумтаълим фанларини билиш даражасини аниқлаш бўйича</div>
  <div class="jl" style="top:542.9px">бўлиб ўтадиган синовларда қатнашиш учун талабгорларга электрон ариза</div>
  <div class="jl" style="top:561.1px">топшириш имконияти яратилди ва давлат намунасидаги сертификатларни</div>
  <div class="t" style="top:579.3px;left:581px;line-height:18px">электрон шаклда бериш йўлга қўйилди.</div>

  <div class="jl" style="top:602.6px;left:622px;width:494.5px">Шу билан бирга, умумтаълим фанларини билиш даражасини</div>
  <div class="jl" style="top:621.6px">баҳолашнинг миллий тест синовларида иштирок этишга ариза бериш</div>
  <div class="jl" style="top:640.0px">ва берилган сертификатларнинг электрон шаклини юклаб олиш борасида</div>
  <div class="jl" style="top:659.0px">рақамли хизматларни кўрсатиш имкониятларини янада кенгайтириш,</div>
  <div class="jl" style="top:677.4px">шу жумладан, ушбу хизматларни Ўзбекистон Республикаси Ягона</div>
</div>
</div>


<!-- scrollbar -->
<div class="a" style="left:1295px;top:119px;width:17px;height:571px;background:#f0f0f0;border:1px solid #fff;border-top:0"></div>
<svg class="ic" style="left:1299px;top:124px" width="9" height="8" viewBox="0 0 9 8"><path d="M1.2 6.6L4.5 2.2l3.3 4.4" fill="none" stroke="#555" stroke-width="2.1"/></svg>
<div class="a" style="left:1296px;top:136px;width:15px;height:29px;background:#cdcdcd"></div>
<svg class="ic" style="left:1299px;top:678px" width="9" height="8" viewBox="0 0 9 8"><path d="M1.2 1.2L4.5 5.6l3.3-4.4" fill="none" stroke="#555" stroke-width="2.1"/></svg>

<!-- TASKBAR -->
<div class="a" id="task"></div>
<!-- start -->
<svg class="ic" style="left:16px;top:740px" width="17" height="17" viewBox="0 0 17 17">
  <path d="M0 2.3L6 1.3V6.9H0z" fill="#fff"/><path d="M7 1.1L16.1 0V6.9H7z" fill="#fff"/>
  <path d="M0 8H6v5.9L0 13z" fill="#fff"/><path d="M7 8h9.1v8.2L7 15z" fill="#fff"/>
</svg>
<!-- search -->
<svg class="ic" style="left:63px;top:739px" width="18" height="18" viewBox="0 0 18 18">
  <circle cx="11.4" cy="6.6" r="4.9" fill="none" stroke="#fff" stroke-width="1.2"/>
  <path d="M7.9 10.1L1.2 16.8" stroke="#fff" stroke-width="1.3"/>
</svg>
<!-- task view -->
<svg class="ic" style="left:111px;top:740px" width="18" height="16" viewBox="0 0 18 16">
  <path d="M1 0v1.2h10.2V0M1 15.5v-1.2h10.2v1.2" fill="none" stroke="#fff" stroke-width="1.1"/>
  <rect x="1" y="3.8" width="10.2" height="7.6" fill="none" stroke="#fff" stroke-width="1.1"/>
  <path d="M15.3 0v15.5" stroke="#fff" stroke-width="1.1"/><rect x="14" y="3.7" width="2.7" height="3" fill="#fff"/>
</svg>
<!-- excel -->
<svg class="ic" style="left:158px;top:735px" width="26" height="25" viewBox="0 0 26 25">
  <defs><linearGradient id="xg" x1="0" y1="0" x2="0" y2="1"><stop offset="0" stop-color="#f4f8ee"/><stop offset="1" stop-color="#dfe8cf"/></linearGradient></defs>
  <path d="M2 6C2 3 4 1 7 1h12.5v20H2z" fill="#e6ecda" stroke="#6cbc3c" stroke-width="1"/>
  <path d="M6 7l18 1.5-1 15.5-17-1.5z" fill="url(#xg)" stroke="#c8d0b8" stroke-width="0.5"/>
  <path d="M8 17h4v3.5H8zM13.5 17.5h4v3.5h-4zM19 18h3.5v3.5H19zM16.5 8.5h6v3h-6zM16.5 12.5h6v3h-6z" fill="#5aa048"/>
  <path d="M7 7l3.5 0 2 3 2-2.8h3l-3.6 4.6 3.8 4.4h-3.2L12.3 13l-2.2 3.2H7.2l3.6-4.6z" fill="#2a6a1a"/>
</svg>
<!-- edge -->
<svg class="ic" style="left:204px;top:732px" width="32" height="32" viewBox="0 0 32 32">
  <defs>
    <linearGradient id="eg1" x1="0.15" y1="0.1" x2="0.95" y2="0.65"><stop offset="0" stop-color="#33bdf0"/><stop offset="0.5" stop-color="#34c7b4"/><stop offset="1" stop-color="#6eea58"/></linearGradient>
    <linearGradient id="eg2" x1="0" y1="0" x2="0.3" y2="1"><stop offset="0" stop-color="#1b92e6"/><stop offset="1" stop-color="#0d6fd0"/></linearGradient>
  </defs>
  <circle cx="16" cy="15.8" r="12.1" fill="url(#eg1)"/>
  <path d="M4.1 13.5C5.5 10.5 9 9.3 12.5 9.8 15.5 10.3 17.5 12.5 17.8 15 14 13 10.5 14.5 10.5 18 10.5 22 14.5 24.2 19.5 24.2 22.5 24.2 24.8 23.2 26.5 21.7A12.1 12.1 0 0 1 4.1 13.5z" fill="url(#eg2)"/>
  <path d="M10.5 18C10.5 22 14.5 24.2 19.5 24.2 22.5 24.2 24.8 23.2 26.5 21.7 24.5 25.5 20.5 27.9 16 27.9 12.5 27.9 9.8 25 9.8 21.5 9.8 20 10 19 10.5 18z" fill="#0e5aa8"/>
  <path d="M12.8 16.5C13 20 16 21.2 19 21.3 22 21.4 24.5 21 26.6 20.3L26.5 21.7C24.8 23.2 22.5 24.2 19.5 24.2 14.5 24.2 10.5 22 10.5 18 10.5 17 11.5 16.5 12.8 16.5z" fill="#1470c8"/>
  <circle cx="15.8" cy="16.6" r="2.7" fill="#223841"/>
  <path d="M17.8 18.8c2 1.2 5 1.4 8.8.9" stroke="#223841" stroke-width="0.9" fill="none"/>
</svg>
<!-- telegram -->
<svg class="ic" style="left:257px;top:736px" width="30" height="28" viewBox="0 0 30 28">
  <circle cx="12" cy="11.8" r="11.2" fill="#2aa0e0"/>
  <path d="M5 11.5l13-5-2 10.5-3.8-2.8-2 1.8.3-3 4.8-4.5-6.3 3.8z" fill="#fff"/>
  <rect x="9.5" y="14.8" width="16.5" height="11.5" rx="2.2" fill="#7a7a7a"/>
  <text x="11" y="24" font-family="Liberation Sans" font-size="10" fill="#e8e8e8">.33</text>
</svg>
<div class="a" style="left:249px;top:766px;width:40px;height:2px;background:#76b9ed"></div>
<!-- opera -->
<svg class="ic" style="left:306px;top:736px" width="24" height="24" viewBox="0 0 24 24">
  <defs><linearGradient id="og" x1="0" y1="0" x2="0" y2="1"><stop offset="0" stop-color="#ff2a3a"/><stop offset="1" stop-color="#c40a1e"/></linearGradient></defs>
  <ellipse cx="11.8" cy="11.8" rx="11.3" ry="11.3" fill="url(#og)"/>
  <ellipse cx="11.8" cy="11.8" rx="4.6" ry="8.3" fill="#233740"/>
</svg>
<!-- chrome -->
<svg class="ic" style="left:354px;top:735px" width="26" height="26" viewBox="0 0 26 26">
  <circle cx="12.5" cy="12.9" r="12.2" fill="#db4437"/>
  <path d="M12.5 12.9L1.9 6.8A12.2 12.2 0 0 0 6.4 23.5z" fill="#0f9d58"/>
  <path d="M12.5 12.9L6.4 23.5A12.2 12.2 0 0 0 24.7 12.9z" fill="#fcc934"/>
  <path d="M12.5 7.3h11A12.2 12.2 0 0 1 24.7 12.9h-12.2z" fill="#fcc934"/>
  <circle cx="12.5" cy="12.9" r="5.6" fill="#fff"/><circle cx="12.5" cy="12.9" r="4.4" fill="#3b78e7"/>
</svg>
<div class="a" style="left:347px;top:766px;width:40px;height:2px;background:#76b9ed"></div>
<!-- adobe active -->
<div class="a" style="left:392px;top:728px;width:44px;height:40px;background:#4a5d65"></div>
<div class="a" style="left:436px;top:728px;width:4px;height:40px;background:#3a4d55"></div>
<div class="a" style="left:392px;top:766px;width:48px;height:2px;background:#76b9ed"></div>
<svg class="ic" style="left:404px;top:736px" width="24" height="22" viewBox="0 0 24 22">
  <defs><linearGradient id="ag" x1="0" y1="0" x2="0" y2="1"><stop offset="0" stop-color="#f01818"/><stop offset="1" stop-color="#a80808"/></linearGradient></defs>
  <rect x="1" y="0.5" width="21.5" height="20" fill="url(#ag)"/>
  <path d="M10.5 4c1 0 1 2 0 4.5-1.5 4-4 7-5.5 8 1.5-1.5 7-3 12-2 1 .3 1 1-1 1-3 0-6-3-7-7" fill="none" stroke="#fff" stroke-width="1.2"/>
</svg>
<!-- tray: people -->
<svg class="ic" style="left:1034px;top:738px" width="18" height="19" viewBox="0 0 18 19">
  <circle cx="12" cy="4.9" r="2.9" fill="none" stroke="#fff" stroke-width="1.2"/>
  <path d="M9.3 9.1C11.5 7.9 14.8 8.4 16.2 11" fill="none" stroke="#fff" stroke-width="1.2"/>
  <circle cx="6" cy="10.6" r="2.9" fill="none" stroke="#fff" stroke-width="1.2"/>
  <path d="M1.5 17c.5-2 2.3-3.4 4.5-3.4s4 1.4 4.5 3.4" fill="none" stroke="#fff" stroke-width="1.2"/>
</svg>
<svg class="ic" style="left:1072px;top:744px" width="14" height="8" viewBox="0 0 14 8"><path d="M1 6.8L7 0.9l6 5.9" fill="none" stroke="#fff" stroke-width="1.2"/></svg>
<svg class="ic" style="left:1097px;top:742px" width="14" height="14" viewBox="0 0 14 14">
  <path d="M1 13A12 12 0 0 1 13 1" fill="none" stroke="#aab" stroke-width="1"/>
  <path d="M3.5 13A9.5 9.5 0 0 1 13 3.5" fill="none" stroke="#fff" stroke-width="1.1"/>
  <path d="M6 13A7 7 0 0 1 13 6" fill="none" stroke="#fff" stroke-width="1.1"/>
  <path d="M8.5 13A4.5 4.5 0 0 1 13 8.5" fill="none" stroke="#fff" stroke-width="1.1"/>
  <circle cx="11.3" cy="11.6" r="1.5" fill="#fff"/>
</svg>
<svg class="ic" style="left:1118px;top:739px" width="18" height="18" viewBox="0 0 18 18">
  <circle cx="9" cy="9" r="8.1" fill="#f4d020"/>
  <path d="M2 5.5A8 8 0 0 1 15.5 4.5L13 6A6 6 0 0 0 4 6.5z" fill="#3aa040"/>
  <path d="M16 12.5A8 8 0 0 1 2.5 13.5L5 12A6 6 0 0 0 14 11.5z" fill="#3aa040"/>
  <path d="M7.6 5h2.8v2.6H13v2.8h-2.6V13H7.6v-2.6H5V7.6h2.6z" fill="#2a9a38"/>
</svg>
<svg class="ic" style="left:1143px;top:740px" width="17" height="17" viewBox="0 0 17 17">
  <path d="M0 16V8C0 3 3.5 0 8.5 0H16v8c0 5-3.5 8-8.5 8z" fill="#e02020"/>
  <circle cx="8" cy="8.2" r="6" fill="#fff"/><circle cx="8" cy="8.2" r="4.5" fill="#f07a20"/><circle cx="8" cy="8.2" r="2.3" fill="#c83010"/><circle cx="8" cy="8" r="1" fill="#f8c040"/>
</svg>
<svg class="ic" style="left:1166px;top:741px" width="18" height="13" viewBox="0 0 18 13">
  <path d="M1.2 1v2.5M4.4 1v2.5" stroke="#fff" stroke-width="1"/>
  <path d="M0.5 3.5h4.6v2.5c0 1.3-1 2.3-2.3 2.3S0.5 7.3.5 6z" fill="none" stroke="#fff" stroke-width="1"/>
  <path d="M2.8 8.3v4.2" stroke="#fff" stroke-width="1"/>
  <rect x="5" y="3" width="11" height="8.8" fill="none" stroke="#fff" stroke-width="1.1"/>
  <rect x="6.5" y="5" width="8" height="5" fill="#fff"/>
  <path d="M16.5 5.5v3.5" stroke="#fff" stroke-width="1.2"/>
</svg>
<svg class="ic" style="left:1190px;top:741px" width="18" height="15" viewBox="0 0 18 15">
  <path d="M0.6 4.5h2.8l3.6-3.4v12.6L3.4 10.3H0.6z" fill="none" stroke="#fff" stroke-width="1.1"/>
  <path d="M9.2 5.3c.9 1.3.9 3.2 0 4.5" fill="none" stroke="#fff" stroke-width="1.1"/>
  <path d="M11.6 3.6c1.6 2.3 1.6 5.6 0 7.9" fill="none" stroke="#fff" stroke-width="1.1"/>
  <path d="M14.2 1.4c2.4 3.5 2.4 8.6 0 12.1" fill="none" stroke="#fff" stroke-width="1.1"/>
</svg>
<div class="t" style="left:1217px;top:742px;font-size:12px;color:#fff;letter-spacing:-0.4px">ENG</div>
<div class="t" style="left:1267px;top:733px;font-size:12px;color:#fff;letter-spacing:-0.8px">16:14</div>
<div class="t" style="left:1254px;top:751px;font-size:12px;color:#fff;letter-spacing:-0.75px">18.02.2024</div>
<svg class="ic" style="left:1324px;top:740px" width="18" height="17" viewBox="0 0 18 17">
  <path d="M0.6 0.6h16v11.8h-5.4L8.6 15.2 6 12.4H0.6z" fill="none" stroke="#fff" stroke-width="1.1"/>
</svg>
<div class="a" style="left:1360px;top:728px;width:1px;height:40px;background:#5c6878"></div>

</body></html>
